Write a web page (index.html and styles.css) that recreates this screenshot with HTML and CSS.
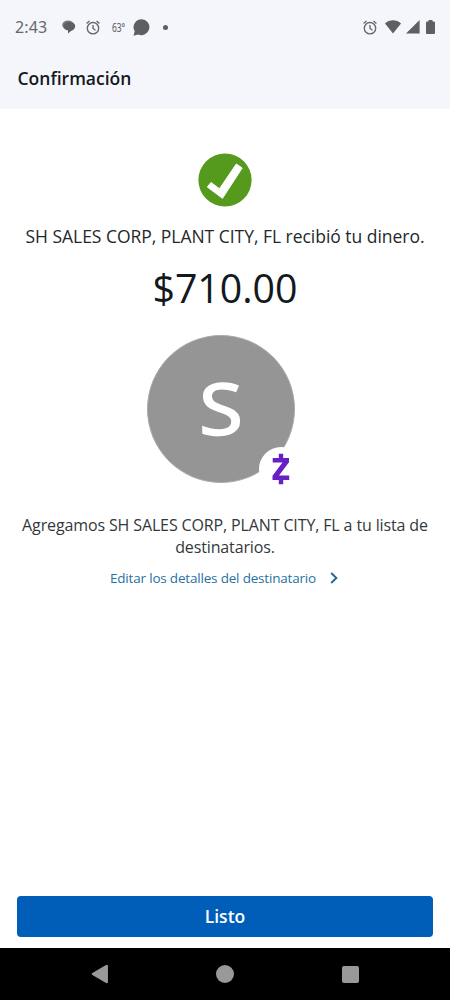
FILE: index.html
```html
<!DOCTYPE html>
<html lang="es">
<head>
<meta charset="utf-8">
<title>Confirmación</title>
<link rel="stylesheet" href="styles.css">
</head>
<body>
<div class="screen">
  <header class="top">
    <div class="status">
      <span class="time">2:43</span>
      <svg class="chat" width="14" height="14" viewBox="0 0 14 14"><ellipse cx="6" cy="5" rx="5.8" ry="4.6" fill="#77797d"/><path d="M7.500 2C11 2 13.200 3.800 13.200 6.300c0 2.300-2 4-4.200 4.700L6 13.500v-3C3.800 10.300 1.700 8.800 1.700 6.300 1.700 3.800 4 2 7.500 2z" fill="#5d5f62"/></svg>
      <svg class="alarm" width="14" height="15" viewBox="0 0 14 15"><use href="#alarm"/></svg>
      <span class="temp">63°</span>
      <svg class="bubble" width="17" height="17" viewBox="0 0 17 17"><path d="M8.600.2a8 8 0 1 1-3.500 15.300L.5 16.800l1.200-4.500A8 8 0 0 1 8.600.2z" fill="#5d5f62"/></svg>
      <span class="dot"></span>
      <svg class="alarm-right" width="14" height="15" viewBox="0 0 14 15"><g id="alarm" fill="none" stroke="#65676b" stroke-width="1.350"><circle cx="7" cy="8.200" r="5.700"/><path d="M.6 3.500 3.500 1.100M13.400 3.500 10.500 1.100M7 5v3.500l2.500 1.800"/></g></svg>
      <svg class="wifi" width="16" height="14" viewBox="0 0 16 14"><path d="M0 3.500C4.500-.7 11.500-.7 16 3.500L8 13.600z" fill="#5d5f62"/></svg>
      <svg class="signal" width="14" height="14" viewBox="0 0 14 14"><path d="M13.600 0v13.500H0z" fill="#5d5f62"/></svg>
      <svg class="battery" width="9" height="14" viewBox="0 0 9 14"><path d="M2.500 0h4v1.400h1.300q1.200 0 1.200 1.200V13q0 1-1 1H1q-1 0-1-1V2.600q0-1.200 1.200-1.200h1.300z" fill="#5d5f62"/></svg>
    </div>
    <h1 class="title">Confirmación</h1>
  </header>
  <main class="content">
    <svg class="check" width="54" height="54" viewBox="0 0 54 54"><circle cx="27" cy="27" r="26.600" fill="#55991d"/><path d="M9.300 34 13 29.500 21.500 35.800 38.300 11 44.200 15 24.500 45.300z" fill="#fff" stroke="#fff" stroke-linejoin="round"/></svg>
    <p class="received">SH SALES CORP, PLANT CITY, FL recibió tu dinero.</p>
    <p class="amount">$710.00</p>
    <div class="avatar">
      <span class="initial">S</span>
      <span class="badge"><svg width="18" height="32" viewBox="0 0 18 32"><path d="M9 .8v6M9 25v6.200" fill="none" stroke="#6720c4" stroke-width="4.400"/><path d="M.7 5H17v4.200L7 22.500h10.200v4.400H.5v-4.200L10.500 9.400H.7z" fill="#6720c4"/></svg></span>
    </div>
    <p class="added">Agregamos SH SALES CORP, PLANT CITY, FL a tu lista de<br>destinatarios.</p>
    <a class="edit"><span>Editar los detalles del destinatario</span><svg width="8" height="12" viewBox="0 0 8 12"><path d="M1.200 1 6.400 6 1.200 11" fill="none" stroke="#1f679b" stroke-width="1.900"/></svg></a>
  </main>
  <div class="action"><button class="done">Listo</button></div>
  <nav class="nav">
    <svg width="18" height="20" viewBox="0 0 18 20"><path d="M15.700 2v16L2 10z" fill="#999" stroke="#999" stroke-width="2.500" stroke-linejoin="round"/></svg>
    <span class="home"></span>
    <span class="recent"></span>
  </nav>
</div>
</body>
</html>
```
FILE: styles.css
```css
* { box-sizing: border-box; }
body { margin: 0; background: #fff; font-family: "Open Sans", "Noto Sans", sans-serif; color: #15191d; }
svg { display: block; flex: none; }
.screen { width: 450px; height: 1000px; display: flex; flex-direction: column; overflow: hidden; }
.top { height: 109px; background: #f4f6fb; flex: none; }
.status { height: 54px; display: flex; align-items: center; padding: 0 15px; color: #65676b; }
.time { width: 47px; font: 16px/20px "Noto Sans", sans-serif; letter-spacing: .1px; }
.alarm { margin-left: 10px; }
.temp { margin-left: 12px; width: 21px; font-size: 13.5px; line-height: 18px; transform: scaleX(.62); transform-origin: left; -webkit-text-stroke: .2px; }
.bubble { margin-left: 0; }
.dot { width: 5px; height: 5px; border-radius: 50%; background: #5d5f62; margin-left: 13px; }
.alarm-right { margin-left: auto; }
.wifi { margin-left: 8px; }
.signal { margin-left: 5px; }
.battery { margin-left: 6px; }
.title { margin: 11px 0 0 17.5px; font-size: 17.5px; line-height: 26px; font-weight: 600; }
.content { flex: 1; display: flex; flex-direction: column; align-items: center; text-align: center; }
.check { margin-top: 44px; }
p { margin: 0; white-space: nowrap; }
.received { margin-top: 17px; font-size: 17.5px; letter-spacing: -.03px; line-height: 24px; color: #24282b; }
.amount { margin-top: 12px; font-size: 39.3px; line-height: 56px; }
.avatar { position: relative; width: 148px; height: 148px; margin: 19px 8px 0 0; border-radius: 50%; background: #959595; border: 1px solid #aaa; }
.initial { display: block; font: 71px/143px "Noto Sans", sans-serif; color: #fff; -webkit-text-stroke: 1.5px #fff; transform: scaleX(1.13); }
.badge { position: absolute; left: 111px; top: 111px; width: 44px; height: 44px; border-radius: 50%; background: #fff; display: flex; align-items: center; justify-content: center; }
.added { margin-top: 31px; font-size: 16px; letter-spacing: -.13px; line-height: 22px; color: #34383b; }
.edit { margin: 10px 2px 0 0; display: flex; align-items: center; gap: 14px; font-size: 13.5px; letter-spacing: -.19px; line-height: 20px; color: #29719f; }
.action { flex: none; height: 64px; padding: 11.5px 17px 12px; }
.done { display: block; width: 416px; height: 41px; border: 0; border-radius: 4px; background: #005eb8; color: #fff; font: 600 17.5px/41px "Open Sans", sans-serif; padding: 0; }
.nav { flex: none; height: 52px; background: #000; display: flex; align-items: center; padding-left: 91px; }
.home { width: 18px; height: 18px; border-radius: 50%; background: #999; margin-left: 107px; }
.recent { width: 17px; height: 17px; border-radius: 2px; background: #999; margin-left: 108px; }
```
